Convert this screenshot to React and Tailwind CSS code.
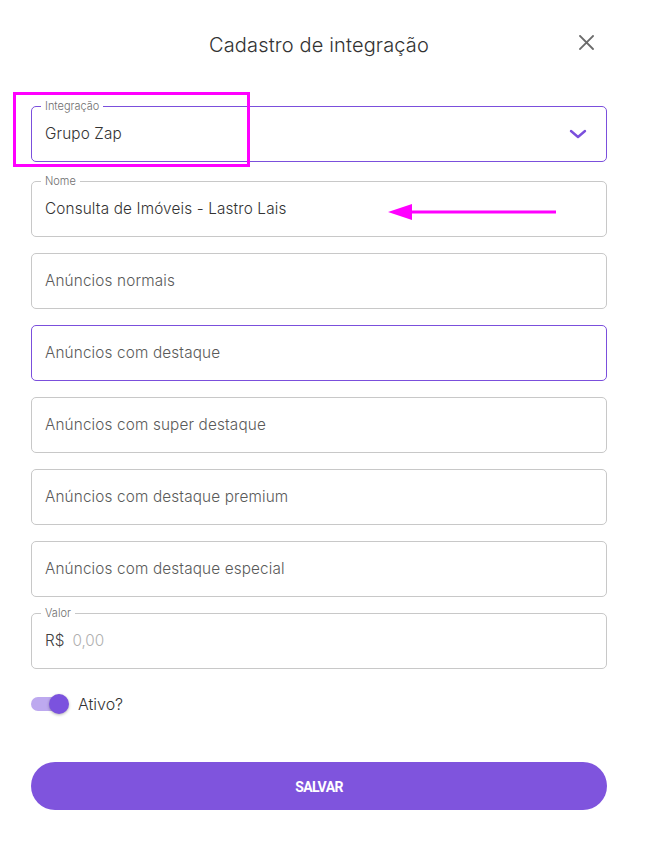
import React from "react";

const font = { fontFamily: "Inter, 'Noto Sans', sans-serif" };

function Field({ label, children, focused, className = "" }) {
  return (
    <div
      className={`relative flex h-[56px] items-center rounded-[5px] border px-[13px] ${
        focused ? "border-[#7b4fdc]" : "border-[#c8c8c8]"
      } ${className}`}
    >
      {label && (
        <span className="absolute left-[9px] top-[-8px] bg-white px-[4px] text-[11px] font-light leading-[14px] text-[#6f6f6f]">
          {label}
        </span>
      )}
      {children}
    </div>
  );
}

export default function App() {
  const placeholders = [
    { t: "Anúncios normais" },
    { t: "Anúncios com destaque", focused: true },
    { t: "Anúncios com super destaque" },
    { t: "Anúncios com destaque premium" },
    { t: "Anúncios com destaque especial" },
  ];
  return (
    <div
      className="relative min-h-[847px] w-[648px] bg-white pl-[31px] pr-[41px] text-[#404040]"
      style={font}
    >
      <div className="grid h-[90px] grid-cols-[1fr_auto_1fr] items-center">
        <div />
        <h1 className="text-[20px] font-light tracking-[0.15px] text-[#333333]">
          Cadastro de integração
        </h1>
        <div className="flex justify-end pr-[13px] pb-[6px]">
          <svg width="15" height="15" viewBox="0 0 15 15">
            <path d="M1 1L14 14M14 1L1 14" stroke="#6b6b6b" strokeWidth="1.8" strokeLinecap="square" />
          </svg>
        </div>
      </div>

      <div className="mt-[16px] flex flex-col">
        <Field label="Integração" focused>
          <span className="flex-1 text-[15.3px] font-light tracking-[0.15px] text-[#333333]">Grupo Zap</span>
          <svg width="18" height="10" viewBox="0 0 18 10" className="mr-[6px]">
            <path d="M2 2L9 8L16 2" fill="none" stroke="#7b4fdc" strokeWidth="2.4" strokeLinecap="round" strokeLinejoin="round" />
          </svg>
        </Field>
        <Field label="Nome" className="mt-[19px]">
          <span className="text-[15.3px] font-light tracking-[0.15px] text-[#333333]">Consulta de Imóveis - Lastro Lais</span>
        </Field>
        {placeholders.map((p) => (
          <Field key={p.t} focused={p.focused} className="mt-[16px]">
            <span className="text-[15.3px] font-light tracking-[0.15px] text-[#5a5a5a]">{p.t}</span>
          </Field>
        ))}
        <Field label="Valor" className="mt-[16px]">
          <span className="text-[15.3px] font-light text-[#404040]">R$</span>
          <span className="ml-[8px] text-[15.3px] font-light text-[#b0b0b0]">0,00</span>
        </Field>
      </div>

      <div className="mt-[25px] flex h-[20px] items-center">
        <div className="relative flex h-[20px] w-[38px] items-center">
          <div className="h-[14px] w-[34px] rounded-full bg-[#bda9ef]" />
          <div className="absolute right-0 top-0 h-[20px] w-[20px] rounded-full bg-[#7b52de] shadow-[0_1px_3px_rgba(0,0,0,0.3)]" />
        </div>
        <span className="ml-[9px] text-[16px] font-light text-[#333333]">Ativo?</span>
      </div>

      <button className="mt-[48px] flex h-[48px] w-full items-center justify-center rounded-full bg-[#7f54dd] pt-[2px] text-[14px] font-bold tracking-[-0.6px] text-white" style={{ fontFamily: "Roboto, sans-serif" }}>
        SALVAR
      </button>

      {/* annotation overlays */}
      <div className="pointer-events-none absolute left-[13px] top-[92px] h-[75px] w-[237px] border-[3px] border-[#ff00ff]" />
      <svg className="pointer-events-none absolute left-[386px] top-[202px]" width="172" height="20" viewBox="0 0 172 20">
        <path d="M2 10L26 2L26 18Z" fill="#ff00ff" />
        <path d="M24 10L170 10" stroke="#ff00ff" strokeWidth="3" />
      </svg>
    </div>
  );
}
